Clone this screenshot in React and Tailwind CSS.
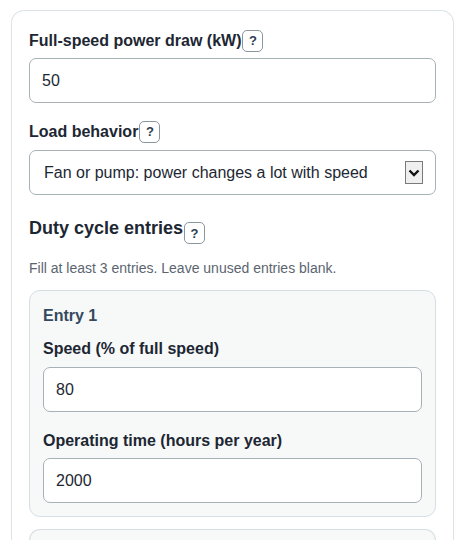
import React from "react";

const font = { fontFamily: '"Liberation Sans", Arial, sans-serif' };

function Help({ className = "" }) {
  return (
    <span
      className={
        "ml-[1px] inline-flex h-[22px] w-[21px] shrink-0 items-center justify-center rounded-[5px] border border-[#8a969e] bg-white text-[13px] font-bold leading-none text-[#2c3e50] " +
        className
      }
    >
      ?
    </span>
  );
}

function Label({ children, help, className = "" }) {
  return (
    <div className={"flex h-[21px] items-center " + className}>
      <span className="text-[16px] font-bold leading-[21px] text-[#1d2733]">{children}</span>
      {help && <Help />}
    </div>
  );
}

function Input({ value, className = "" }) {
  return (
    <div
      className={
        "flex h-[45px] items-center rounded-[7px] border border-[#a7b1b8] bg-white px-[12px] text-[16px] text-[#1d2733] " +
        className
      }
    >
      {value}
    </div>
  );
}

export default function App() {
  return (
    <div className="h-[540px] overflow-hidden bg-white" style={font}>
      <div className="ml-[11px] mt-[10px] w-[443px] rounded-t-[13px] border border-b-0 border-[#dbe3e6] bg-white px-[17px] pt-[19px]">
        <Label help>Full-speed power draw (kW)</Label>
        <Input value="50" className="mt-[7px]" />

        <Label help className="mt-[18px]">Load behavior</Label>
        <div className="mt-[8px] flex h-[45px] items-center justify-between rounded-[7px] border border-[#a7b1b8] bg-white pl-[14px] pr-[12px] text-[16px] text-[#1d2733]">
          <span>Fan or pump: power changes a lot with speed</span>
          <span className="flex h-[23px] w-[18px] items-center justify-center border border-[#7a7a7a] bg-[#efefef]">
            <svg width="12" height="8" viewBox="0 0 12 8">
              <path d="M1.5 1.5 L6 6 L10.5 1.5" fill="none" stroke="#111" strokeWidth="2.4" />
            </svg>
          </span>
        </div>

        <div className="mt-[23px] flex items-start">
          <span className="text-[18px] font-bold leading-[21px] text-[#1d2733]">Duty cycle entries</span>
          <Help className="mt-[4px]" />
        </div>
        <div className="mt-[14px] text-[14px] leading-[20px] text-[#5b6570]">
          Fill at least 3 entries. Leave unused entries blank.
        </div>

        <div className="mt-[12px] rounded-[11px] border border-[#d5dfe3] bg-[#f7f9f9] px-[13px] pt-[14px] pb-[13px]">
          <div className="text-[16px] font-bold leading-[21px] text-[#34495e]">Entry 1</div>
          <Label className="mt-[12px]">Speed (% of full speed)</Label>
          <Input value="80" className="mt-[8px]" />
          <Label className="mt-[18px]">Operating time (hours per year)</Label>
          <Input value="2000" className="mt-[7px]" />
        </div>

        <div className="mt-[12px] h-[20px] rounded-t-[11px] border border-b-0 border-[#d5dfe3] bg-[#f7f9f9]" />
      </div>
    </div>
  );
}
